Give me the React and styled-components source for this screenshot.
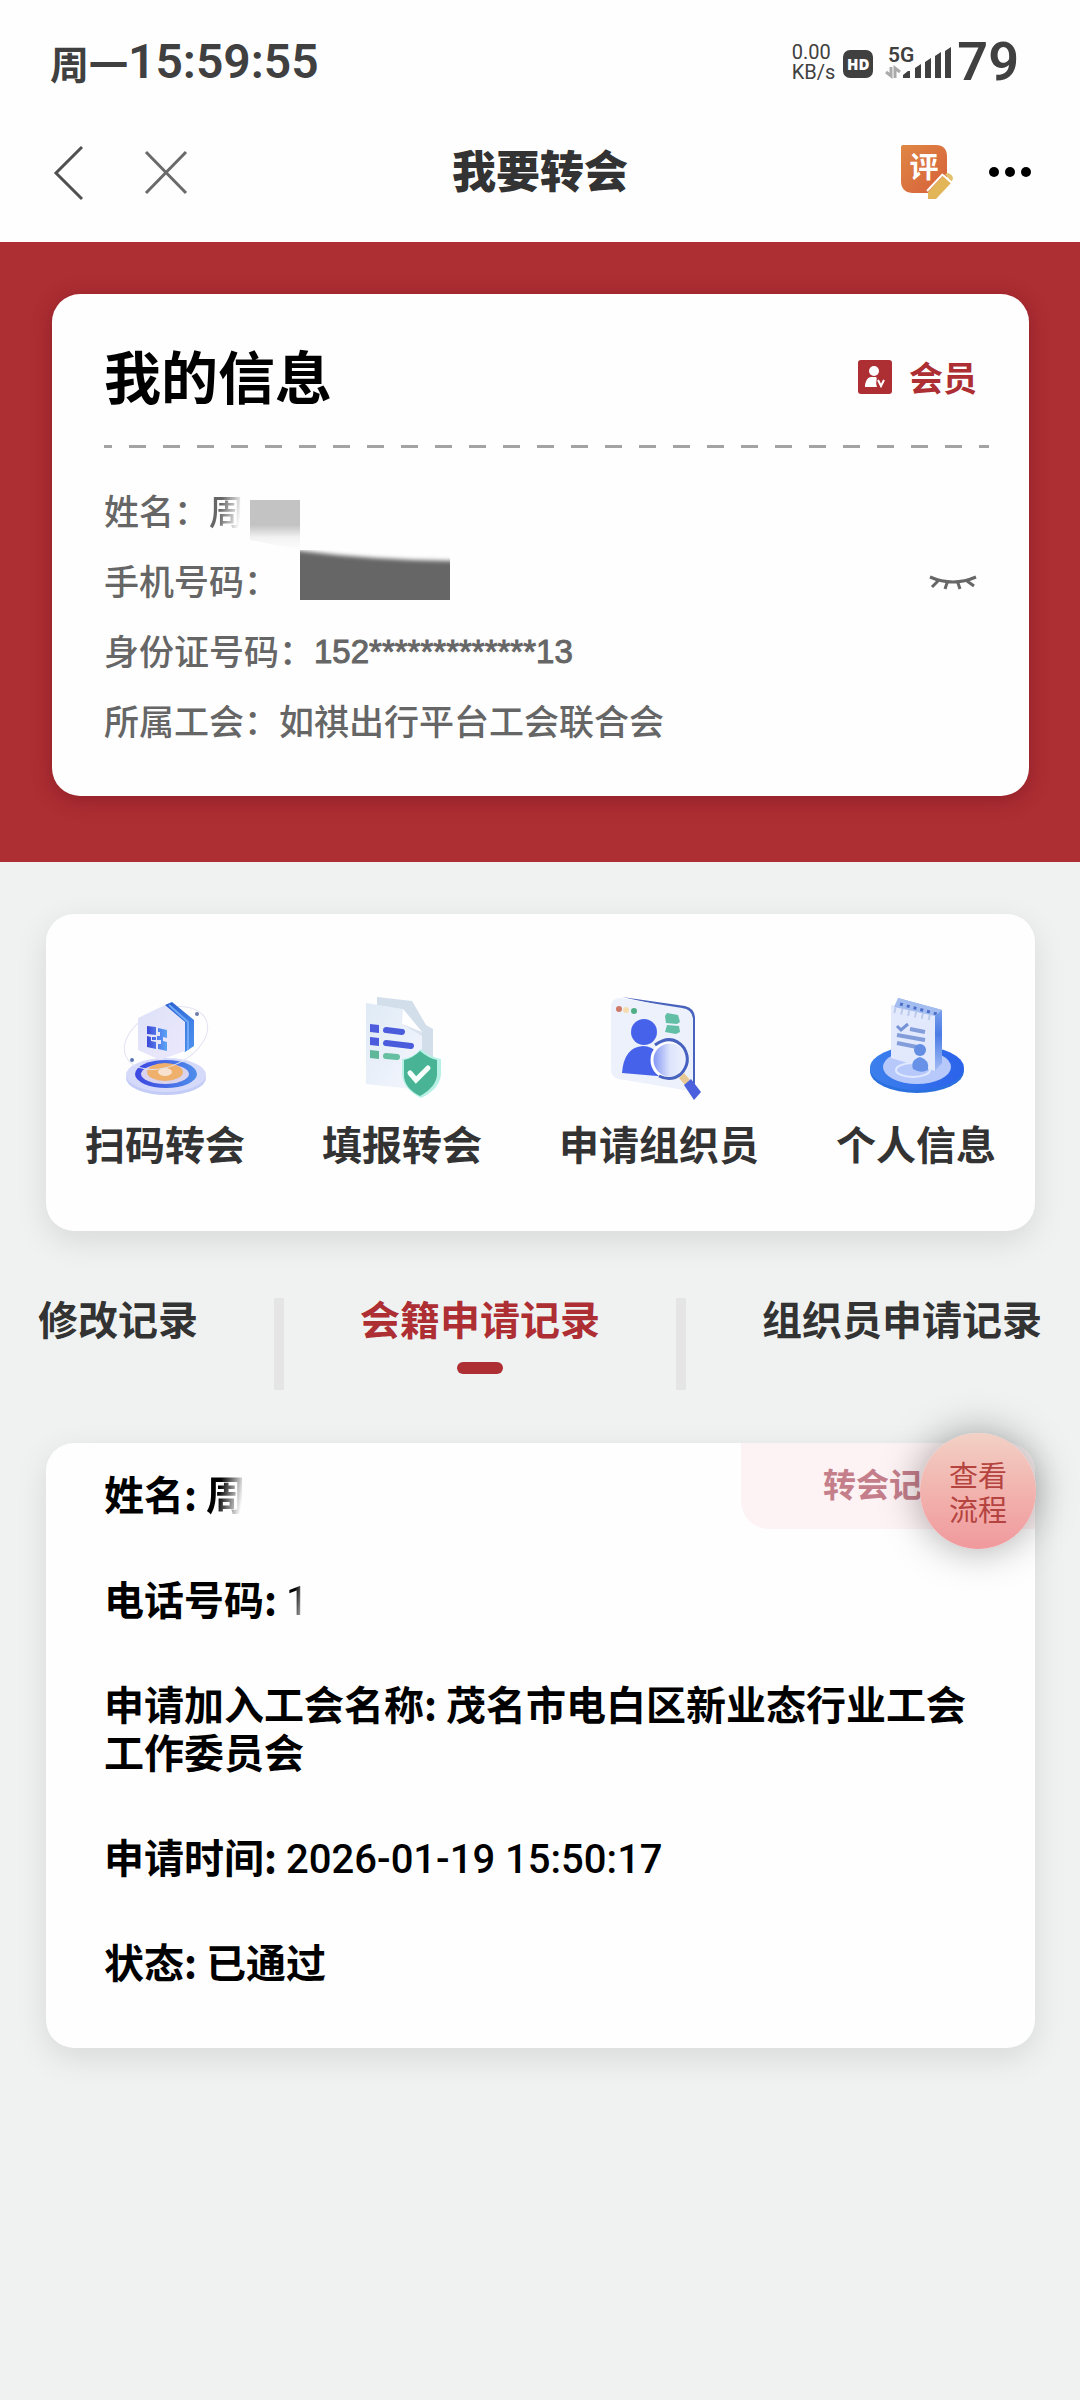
import React, { useState } from "react";
import styled, { createGlobalStyle } from "styled-components";

const red = "#ad2e33";
const ink = "#333333";
const gray = "#666666";

const GlobalStyle = createGlobalStyle`
  * {
    box-sizing: border-box;
  }
  html {
    background: #f0f2f2;
  }
  body {
    margin: 0;
    font-family: "Noto Sans CJK SC", "Noto Sans", sans-serif;
    color: ${ink};
  }
  button {
    border: 0;
    padding: 0;
    background: none;
    font: inherit;
    color: inherit;
    cursor: pointer;
  }
  h1, h2, p {
    margin: 0;
  }
  svg {
    display: block;
    flex: none;
  }
`;
const Page = styled.div`
  min-height: 100vh;
  overflow-x: hidden;
  background: #f0f2f2;
`;
const Header = styled.header`
  background: #fefefe;
  padding-bottom: 24px;
`;
const StatusBar = styled.div`
  height: 124px;
  padding: 0 61px 0 50px;
  display: flex;
  justify-content: space-between;
  align-items: center;
  color: #404040;
`;
const Clock = styled.div`
  display: flex;
  align-items: center;
  font-size: 39px;
  font-weight: 700;
  line-height: 56px;
`;
const ClockTime = styled.span`
  font-family: Roboto, sans-serif;
  font-size: 48px;
  font-weight: 600;
`;
const StatusIcons = styled.div`
  display: flex;
  align-items: center;
`;
const NetSpeed = styled.div`
  display: flex;
  flex-direction: column;
  font-family: Roboto, sans-serif;
  font-size: 20px;
  line-height: 20px;
  margin-right: 8px;
`;
const HdBadge = styled.div`
  width: 30px;
  height: 28px;
  margin: 4px 12px 0 0;
  border-radius: 7px;
  background: #404040;
  color: #ffffff;
  font-family: "Open Sans", sans-serif;
  font-size: 15px;
  font-weight: 800;
  line-height: 28px;
  text-align: center;
`;
const Battery = styled.div`
  font-family: Roboto, sans-serif;
  font-size: 54px;
  font-weight: 600;
  line-height: 60px;
  margin-left: 4px;
`;
const NavBar = styled.nav`
  height: 94px;
  padding: 0 48px;
  display: grid;
  grid-template-columns: 1fr auto 1fr;
  align-items: center;
`;
const NavGroup = styled.div`
  display: flex;
  align-items: center;
  gap: ${p => p.$gap}px;
  justify-content: ${p => (p.$end ? "flex-end" : "flex-start")};
`;
const NavTitle = styled.h1`
  padding-bottom: 4px;
  font-size: 44px;
  font-weight: 900;
  line-height: 60px;
`;
const Banner = styled.section`
  background: ${red};
  padding: 52px 51px 66px 52px;
`;
const InfoCard = styled.div`
  position: relative;
  background: #fefefe;
  border-radius: 28px;
  padding: 40px 52px 42px;
  box-shadow: 0 4px 20px rgba(90, 10, 20, 0.35);
`;
const CardHead = styled.div`
  display: flex;
  justify-content: space-between;
  align-items: center;
  height: 80px;
`;
const CardTitle = styled.h2`
  color: #000000;
  font-size: 57px;
  font-weight: 700;
  line-height: 80px;
`;
const Member = styled.div`
  display: flex;
  align-items: center;
  gap: 17px;
  padding-top: 6px;
  color: ${red};
  font-size: 34px;
  font-weight: 700;
  line-height: 48px;
`;
const DashLine = styled.div`
  height: 3px;
  margin: 31px -12px 26px 0;
  background: repeating-linear-gradient(
    90deg,
    #a3a3a3 0 8px,
    transparent 8px 25px,
    #a3a3a3 25px 34px
  );
`;
const InfoRow = styled.div`
  display: flex;
  align-items: center;
  height: 70px;
  color: ${gray};
  font-size: 35px;
  font-weight: 500;
  white-space: nowrap;
`;
const IdNumber = styled.span`
  padding-top: 6px;
  font-family: "Liberation Sans", sans-serif;
  font-size: 33px;
  font-weight: 400;
  -webkit-text-stroke: 1px ${gray};
`;
const Faded = styled.span`
  -webkit-mask-image: linear-gradient(100deg, #000 35%, transparent 85%);
  mask-image: linear-gradient(100deg, #000 35%, transparent 85%);
`;
const EyeButton = styled.button`
  margin-left: auto;
  && {
    padding-top: 8px;
  }
`;
const Smudge = styled.svg`
  position: absolute;
  left: 198px;
  top: 206px;
`;
const MenuCard = styled.section`
  margin: 52px 45px 0 46px;
  padding: 82px 39px 60px;
  display: flex;
  justify-content: space-between;
  background: #fefefe;
  border-radius: 28px;
  box-shadow: 0 10px 32px rgba(0, 0, 0, 0.1);
`;
const MenuItem = styled.button`
  display: flex;
  flex-direction: column;
  align-items: center;
  gap: 15px;
  && {
    font-size: 40px;
    font-weight: 700;
    line-height: 56px;
  }
  white-space: nowrap;
`;
const Tabs = styled.div`
  display: flex;
  gap: 76px;
  padding: 67px 0 53px 38px;
`;
const Tab = styled.button`
  height: 92px;
  flex: none;
  display: flex;
  flex-direction: column;
  align-items: center;
  gap: 24px;
  && {
    color: ${p => (p.$active ? red : ink)};
    font-size: 40px;
    font-weight: 700;
    line-height: 40px;
  }
  white-space: nowrap;
  &::after {
    content: "";
    width: 46px;
    height: 12px;
    border-radius: 6px;
    background: ${p => (p.$active ? red : "transparent")};
  }
`;
const TabDivider = styled.div`
  flex: none;
  width: 10px;
  height: 92px;
  background: #e5e5e6;
`;
const RecordCard = styled.section`
  position: relative;
  margin: 0 45px 0 46px;
  padding: 26px 52px 63px 58px;
  display: flex;
  flex-direction: column;
  gap: 57px;
  background: #fefefe;
  border-radius: 28px;
  box-shadow: 0 10px 32px rgba(0, 0, 0, 0.1);
`;
const Field = styled.p`
  color: #000000;
  font-size: 40px;
  font-weight: 700;
  line-height: 48px;
`;
const FieldTime = styled.span`
  font-family: Roboto, sans-serif;
  font-weight: 500;
  line-height: 1;
`;
const FadedDigit = styled(Faded)`
  font-family: Roboto, sans-serif;
  font-weight: 400;
  line-height: 1;
`;
const RecordTag = styled.div`
  position: absolute;
  top: 0;
  right: 0;
  width: 294px;
  height: 86px;
  padding-left: 82px;
  border-radius: 0 28px 0 28px;
  background: #fdf2f4;
  color: #c47f8b;
  font-size: 33px;
  font-weight: 700;
  line-height: 80px;
`;
const FlowButton = styled.button`
  position: absolute;
  top: -10px;
  right: -1px;
  width: 116px;
  height: 116px;
  border-radius: 50%;
  && {
    padding: 0 28px;
    background: linear-gradient(#f2d0c5, #f2b3ae 50%, #f0999d);
    color: #b5433f;
    font-size: 29px;
    line-height: 34px;
  }
  box-shadow: 0 0 40px rgba(0, 0, 0, 0.35);
`;

const BackIcon = () => (
  <svg width="42" height="60" viewBox="0 0 42 60" fill="none">
    <path d="M34 6 8 32l26 26" stroke="#505050" strokeWidth="3" />
  </svg>
);
const CloseIcon = () => (
  <svg width="48" height="48" viewBox="0 0 48 48" fill="none">
    <path d="m4 5 40 41M44 5 4 46" stroke="#6a6a6a" strokeWidth="3" />
  </svg>
);
const ReviewIcon = () => (
  <svg width="54" height="58" viewBox="0 0 54 58">
    <defs>
      <linearGradient id="review" x1="0" y1="0" x2="1" y2="1">
        <stop offset="0" stopColor="#df8744" />
        <stop offset="1" stopColor="#d65f3a" />
      </linearGradient>
    </defs>
    <path d="M3 3h33q11 0 11 12v22L32 51H12Q1 50 1 39V5q0-2 2-2Z" fill="url(#review)" />
    <text x="24" y="36" textAnchor="middle" fontSize="29" fontWeight="700" fill="#fff">
      评
    </text>
    <path d="m28 50 15-16 8 7-15 16h-8Z" fill="#e2b658" />
    <path d="m45 32 3-1q7 3 4 8l-1 1Z" fill="#e2c06c" />
    <path d="m27 49 16-17M43 33l9 8" stroke="#fff" strokeWidth="2" />
  </svg>
);
const MoreIcon = () => (
  <svg width="44" height="12" viewBox="0 0 44 12" fill="#000">
    <circle cx="6" cy="7" r="5" />
    <circle cx="22" cy="7" r="5" />
    <circle cx="38" cy="7" r="5" />
  </svg>
);
const SignalIcon = () => (
  <svg width="68" height="36" viewBox="0 0 68 36" fill="#404040">
    <text x="3" y="18" fontFamily="Roboto" fontSize="21" fontWeight="600">5G</text>
    <path d="M6 23v9l-5-4M10 34V24l5 4" fill="none" stroke="#aaa" strokeWidth="3" />
    <path d="m18 31 5-4h2v7h-7ZM30 24l6-4v14h-6ZM40 18l6-4v20h-6ZM50 12l6-4v26h-6ZM60 7l6-4v31h-6Z" />
  </svg>
);
const MemberIcon = () => (
  <svg width="34" height="34" viewBox="0 0 34 34">
    <rect width="34" height="34" rx="3" fill={red} />
    <circle cx="16" cy="11" r="5" fill="#fff" />
    <path d="M7 27c0-6 3-10 6-10h5c2 2-1 4 1 10Z" fill="#fff" />
    <path d="m20 20 3 6 3-6" fill="none" stroke="#fff" strokeWidth="2" />
  </svg>
);
const EyeClosedIcon = () => (
  <svg width="48" height="18" viewBox="0 0 48 18" fill="none" stroke={gray} strokeWidth="3">
    <path d="M1 3q23 10 46 0M9 7l-6 6M18 9l-2 6M29 9l2 6M38 7l7 5" />
  </svg>
);
const ScanIcon = () => (
  <svg width="104" height="104" viewBox="0 0 104 104">
    <defs>
      <linearGradient id="scanFace" x1="0" y1="0" x2="1" y2="1">
        <stop offset="0" stopColor="#dde1f8" />
        <stop offset="1" stopColor="#ece8fc" />
      </linearGradient>
      <linearGradient id="scanSide" x1="0" y1="0" x2="1" y2="1">
        <stop offset="0" stopColor="#2a5fd0" />
        <stop offset="1" stopColor="#4e93ef" />
      </linearGradient>
      <linearGradient id="scanRing" x1="0" y1="0" x2="1" y2="0">
        <stop offset="0" stopColor="#3c46e2" />
        <stop offset="1" stopColor="#4f8eea" />
      </linearGradient>
      <linearGradient id="scanCode" x1="0" y1="0" x2="1" y2="0">
        <stop offset="0" stopColor="#3b48d6" />
        <stop offset="0.4" stopColor="#4f6fe6" />
        <stop offset="1" stopColor="#5aa4f6" />
      </linearGradient>
    </defs>
    <ellipse cx="53" cy="82" rx="40" ry="17" fill="#c3cbf7" />
    <ellipse cx="53" cy="79" rx="40" ry="17" fill="#d6dafa" />
    <ellipse cx="53" cy="78" rx="31" ry="14" fill="url(#scanRing)" />
    <ellipse cx="52" cy="78" rx="24" ry="10" fill="#d9d3ee" />
    <ellipse cx="52" cy="76" rx="18" ry="9" fill="#eeb06a" />
    <ellipse cx="52" cy="76" rx="7" ry="4" fill="#f8e2cf" />
    <ellipse cx="53" cy="42" rx="44" ry="28" fill="none" stroke="#e2e3f2" transform="rotate(-25 53 42)" />
    <path d="m52 9 7-3 22 18v26l-9 6-14-20Z" fill="url(#scanSide)" />
    <path d="M75 54V26L56 9" fill="none" stroke="#6fa9f7" strokeWidth="2" />
    <path d="m25 22 27-13 20 17v29l-25 9-22-10Z" fill="url(#scanFace)" />
    <path
      d="m34 30 9 1v8l-9-1ZM45 32l9 2v8l-4-1v4l4 1v9l-9-2v-5h3v-4h-4v-4h3v-4h-2ZM34 40l4 1v4l5 1v7l-9-2ZM39 41h4v3h-4Z"
      fill="url(#scanCode)"
    />
    <circle cx="84" cy="18" r="2" fill="#6d7da8" />
    <circle cx="19" cy="64" r="2" fill="#5d75b5" />
  </svg>
);
const FormIcon = () => (
  <svg width="104" height="104" viewBox="0 0 104 104">
    <defs>
      <linearGradient id="formPage" x1="0" y1="0" x2="1" y2="1">
        <stop offset="0" stopColor="#dfeaf5" />
        <stop offset="1" stopColor="#f4f6fe" />
      </linearGradient>
    </defs>
    <path d="m27 1 35 4 14 24 7 4v54l-56-4Z" fill="#d3deeb" />
    <path d="m16 7 37 6 19 23v58l-56-6Z" fill="url(#formPage)" />
    <path d="m53 13-1 15 20 8Z" fill="#fff" />
    <path d="m52 28 20 8v4Z" fill="#dbe4f0" />
    <path d="m20 28 9 1v8l-9-1ZM20 41l9 1v8l-9-1Z" fill="#4c5cdd" />
    <path d="m20 54 9 1v8l-9-1Z" fill="#5fb79a" />
    <path d="m36 34 16 2M36 47l25 3" stroke="#4a5bdc" strokeWidth="6" strokeLinecap="round" />
    <path d="m36 60 11 1" stroke="#67bfa2" strokeWidth="6" strokeLinecap="round" />
    <path d="M71 53q9 8 20 10v15q-1 15-20 24-18-9-19-24V63q11-1 19-10Z" fill="#b7f0e5" />
    <path d="M70 55q8 7 17 9v15q-1 12-17 21-16-8-16-21V64q9-2 16-9Z" fill="#49b495" />
    <path d="m60 77 6 7 12-12" fill="none" stroke="#f6fffc" strokeWidth="5" strokeLinecap="round" />
  </svg>
);
const OrganizerIcon = () => (
  <svg width="104" height="104" viewBox="0 0 104 104">
    <defs>
      <linearGradient id="orgLens" x1="0" y1="0" x2="1" y2="0">
        <stop offset="0" stopColor="#7e91f5" />
        <stop offset="0.5" stopColor="#dde4fb" />
        <stop offset="1" stopColor="#f1f4fe" />
      </linearGradient>
    </defs>
    <path d="m15 1 63 9q9 2 10 11v66l-3 6-5-78Z" fill="#4863be" />
    <path d="m13 2 62 10q10 1 11 11v63q0 9-9 8l-65-11q-8-2-8-9V10q1-8 9-8Z" fill="#ecf1fb" />
    <circle cx="12" cy="13" r="3" fill="#cf7967" />
    <circle cx="19" cy="14" r="3" fill="#f5ddb0" />
    <circle cx="27" cy="15" r="3" fill="#4fae85" />
    <path d="m60 17 11 2 2 7-3 2-11-1-1-7ZM60 29l12 1 1 6-4 2-11-2Z" fill="#62bea5" />
    <circle cx="37" cy="36" r="13" fill="#4762ea" />
    <path d="M15 77q2-26 21-27 18 0 26 31Z" fill="#4762ea" />
    <circle cx="63" cy="64" r="18" fill="url(#orgLens)" stroke="#fff" strokeWidth="3" />
    <path d="M48 49q17-12 29 3 8 14-3 26-10 8-22 2" fill="none" stroke="#4862bf" strokeWidth="3" />
    <path d="m72 82 5-5 6 7-5 5Z" fill="#e8c893" />
    <path d="m77 89 7-6 10 13-7 8Z" fill="#4a60dd" />
  </svg>
);
const ProfileIcon = () => (
  <svg width="104" height="104" viewBox="0 0 104 104">
    <defs>
      <linearGradient id="proBase" x1="0" y1="0" x2="1" y2="0">
        <stop offset="0" stopColor="#3c80ed" />
        <stop offset="1" stopColor="#2b62ea" />
      </linearGradient>
      <linearGradient id="proSide" x1="0" y1="0" x2="0" y2="1">
        <stop offset="0" stopColor="#8fb0ee" />
        <stop offset="0.5" stopColor="#4b7be5" />
        <stop offset="1" stopColor="#a3bdf5" />
      </linearGradient>
    </defs>
    <ellipse cx="53" cy="75" rx="47" ry="22" fill="#2a70df" />
    <ellipse cx="53" cy="72" rx="47" ry="22" fill="url(#proBase)" />
    <ellipse cx="53" cy="71" rx="34" ry="17" fill="#b7c9fa" />
    <ellipse cx="49" cy="74" rx="17" ry="7" fill="none" stroke="#e0e9ff" strokeWidth="2" />
    <path d="m34 2 44 12v53l-7 8-37-16Z" fill="url(#proSide)" />
    <path d="m27 9 44 8v58L27 62Z" fill="#e2e9fc" />
    <path d="m34 2 44 12-7 6-41-9Z" fill="#a4bdf1" />
    <path d="m36 8 37 10" stroke="#4d70c9" strokeWidth="3" strokeDasharray="3 4" />
    <path d="m30 14 39 8" stroke="#bccaeb" strokeWidth="6" strokeDasharray="2 5" />
    <path d="m33 30 4 4 7-6" fill="none" stroke="#7693d8" strokeWidth="3" />
    <path d="m46 33 15 3M33 39l28 5M33 47l20 4" stroke="#829dda" strokeWidth="4" />
    <circle cx="56" cy="54" r="6" fill="#638de3" />
    <path d="M49 73q-3-9 7-12 10 3 8 13-7 4-15-1Z" fill="#6792e7" />
  </svg>
);

const menus = [
  { title: "扫码转会", Icon: ScanIcon },
  { title: "填报转会", Icon: FormIcon },
  { title: "申请组织员", Icon: OrganizerIcon },
  { title: "个人信息", Icon: ProfileIcon }
];
const tabs = ["修改记录", "会籍申请记录", "组织员申请记录"];

const MyInfo = () => (
  <Banner>
    <InfoCard>
      <CardHead>
        <CardTitle>我的信息</CardTitle>
        <Member>
          <MemberIcon />
          会员
        </Member>
      </CardHead>
      <DashLine />
      <InfoRow>
        姓名：<Faded>周</Faded>
      </InfoRow>
      <InfoRow>
        手机号码：
        <EyeButton aria-label="显示">
          <EyeClosedIcon />
        </EyeButton>
      </InfoRow>
      <InfoRow>
        身份证号码：<IdNumber>152*************13</IdNumber>
      </InfoRow>
      <InfoRow>所属工会：如祺出行平台工会联合会</InfoRow>
      {/* hides the rest of the name and the phone number */}
      <Smudge width="200" height="100" viewBox="0 0 200 100">
        <defs>
          <linearGradient id="smudgeName" x1="0" y1="0" x2="0" y2="1">
            <stop offset="0" stopColor="#c3c3c3" />
            <stop offset="0.5" stopColor="#c3c3c3" />
            <stop offset="0.75" stopColor="#f2f2f2" />
            <stop offset="1" stopColor="#fefefe" />
          </linearGradient>
          <clipPath id="phoneClip">
            <rect x="50" y="50" width="150" height="50" />
          </clipPath>
          <filter id="soft" x="-20%" y="-20%" width="140%" height="140%">
            <feGaussianBlur stdDeviation="2" />
          </filter>
        </defs>
        <path d="M0 0h50v50L0 40Z" fill="url(#smudgeName)" />
        <g clipPath="url(#phoneClip)">
          <path d="M30 48q90 13 190 13v60H30Z" fill="#666" filter="url(#soft)" />
        </g>
      </Smudge>
    </InfoCard>
  </Banner>
);

const Record = () => (
  <RecordCard>
    <Field>
      姓名: <Faded>周</Faded>
    </Field>
    <Field>
      电话号码: <FadedDigit>1</FadedDigit>
    </Field>
    <Field>申请加入工会名称: 茂名市电白区新业态行业工会工作委员会</Field>
    <Field>
      申请时间: <FieldTime>2026-01-19 15:50:17</FieldTime>
    </Field>
    <Field>状态: 已通过</Field>
    <RecordTag>转会记</RecordTag>
    <FlowButton>查看流程</FlowButton>
  </RecordCard>
);

export default () => {
  const [active, setActive] = useState(1);
  return (
    <Page>
      <GlobalStyle />
      <Header>
        <StatusBar>
          <Clock>
            周一<ClockTime>15:59:55</ClockTime>
          </Clock>
          <StatusIcons>
            <NetSpeed>
              <span>0.00</span>
              <span>KB/s</span>
            </NetSpeed>
            <HdBadge>HD</HdBadge>
            <SignalIcon />
            <Battery>79</Battery>
          </StatusIcons>
        </StatusBar>
        <NavBar>
          <NavGroup $gap={52}>
            <button aria-label="返回">
              <BackIcon />
            </button>
            <button aria-label="关闭">
              <CloseIcon />
            </button>
          </NavGroup>
          <NavTitle>我要转会</NavTitle>
          <NavGroup $gap={34} $end>
            <button aria-label="评价">
              <ReviewIcon />
            </button>
            <button aria-label="更多">
              <MoreIcon />
            </button>
          </NavGroup>
        </NavBar>
      </Header>
      <MyInfo />
      <MenuCard>
        {menus.map(({ title, Icon }) => (
          <MenuItem key={title}>
            <Icon />
            {title}
          </MenuItem>
        ))}
      </MenuCard>
      <Tabs>
        {tabs.map((title, index) => (
          <React.Fragment key={title}>
            {index > 0 && <TabDivider />}
            <Tab $active={index === active} onClick={() => setActive(index)}>
              {title}
            </Tab>
          </React.Fragment>
        ))}
      </Tabs>
      <Record />
    </Page>
  );
};
